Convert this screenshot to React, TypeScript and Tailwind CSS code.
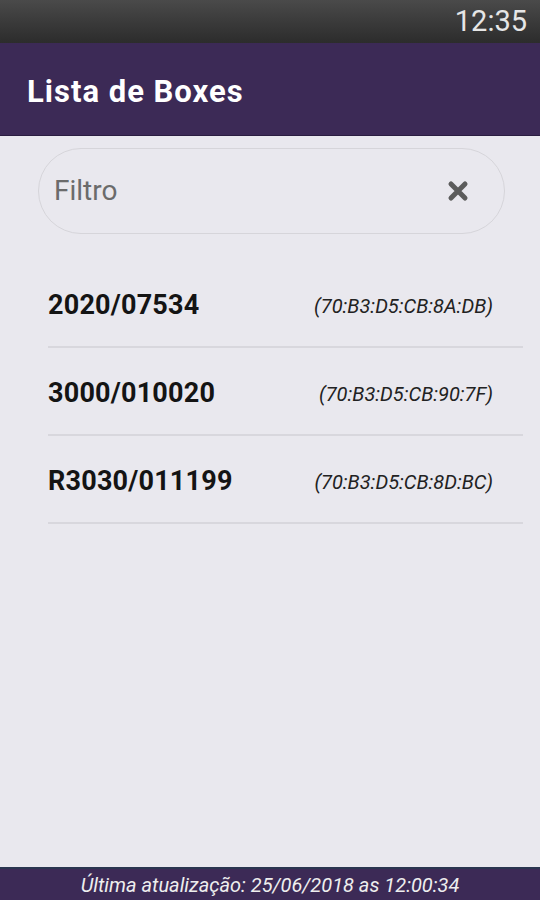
import React from "react";

const rows = [
  { id: "2020/07534", mac: "(70:B3:D5:CB:8A:DB)" },
  { id: "3000/010020", mac: "(70:B3:D5:CB:90:7F)" },
  { id: "R3030/011199", mac: "(70:B3:D5:CB:8D:BC)" },
];

export default function App() {
  return (
    <div className="w-[540px] h-[900px] flex flex-col bg-[#e9e8ee] overflow-hidden" style={{ fontFamily: "Roboto, 'Liberation Sans', sans-serif" }}>
      <div className="h-[43px] shrink-0 bg-gradient-to-b from-[#4a4a4a] to-[#2c2c2c] flex items-center justify-end pr-[13px]">
        <span className="text-[29px] text-[#e6e6e6] leading-none">12:35</span>
      </div>
      <div className="h-[93px] shrink-0 bg-[#3c2a56] flex items-center pl-[27px] pt-[4px] border-b border-[#2a1d40]">
        <span className="text-[31px] font-bold text-white leading-none tracking-[1px]">Lista de Boxes</span>
      </div>
      <div className="flex-1 flex flex-col">
        <div className="ml-[38px] mr-[35px] mt-[12px] h-[86px] rounded-full border border-[#d6d5da] flex items-center pl-[15px] pr-[35px] justify-between">
          <span className="text-[28px] text-[#6b6b6b]">Filtro</span>
          <svg width="22" height="22" viewBox="0 0 22 22">
            <path d="M4 4 L18 18 M18 4 L4 18" stroke="#5c5c5c" strokeWidth="5" strokeLinecap="round" />
          </svg>
        </div>
        <div className="mt-[26px] ml-[48px] mr-[17px] flex flex-col">
          {rows.map((r) => (
            <div key={r.id} className="h-[88px] pt-[5px] flex items-center justify-between border-b-2 border-[#d8d7dd] pr-[30px]">
              <span className="text-[27px] font-bold text-[#141414] tracking-[0.2px]">{r.id}</span>
              <span className="text-[20px] italic text-[#222]">{r.mac}</span>
            </div>
          ))}
        </div>
      </div>
      <div className="h-[33px] shrink-0 bg-[#3c2a56] border-t-2 border-[#2a3550] flex items-center justify-center">
        <span className="text-[20px] italic text-[#eeeeee]">Última atualização: 25/06/2018 as 12:00:34</span>
      </div>
    </div>
  );
}
